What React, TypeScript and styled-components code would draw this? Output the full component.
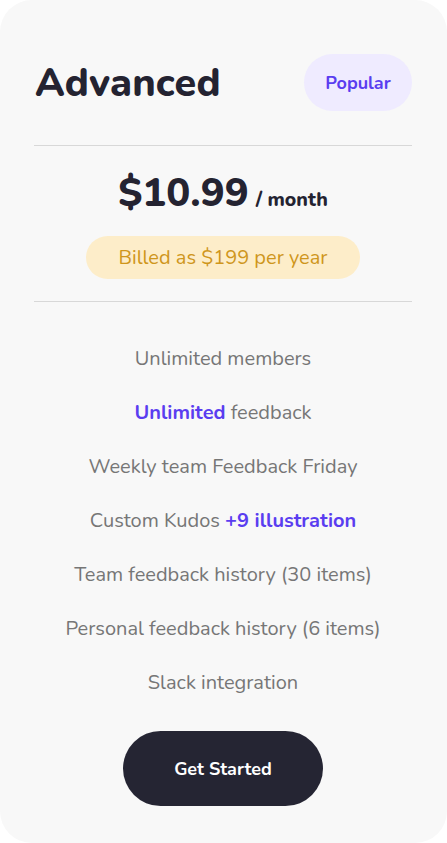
import React from "react";
import styled, { createGlobalStyle } from "styled-components";

const Global = createGlobalStyle`
  html, body { margin: 0; padding: 0; background: #ffffff; }
  body { font-family: "Nunito", "Lato", "Noto Sans", sans-serif; }
  * { box-sizing: border-box; }
`;

const Card = styled.div`
  width: 447px;
  height: 843px;
  background: #f8f8f8;
  border-radius: 32px;
  padding: 54px 35px 0 34px;
  display: flex;
  flex-direction: column;
`;

const Header = styled.div`
  display: flex;
  align-items: center;
  justify-content: space-between;
  height: 57px;
`;

const Title = styled.h1`
  margin: 0 0 0 1px;
  font-size: 39.5px;
  font-weight: 800;
  color: #242331;
  letter-spacing: 0.2px;
`;

const Badge = styled.span`
  width: 108px;
  height: 57px;
  border-radius: 29px;
  background: #efebff;
  color: #5a3df0;
  font-size: 18px;
  font-weight: 700;
  display: flex;
  align-items: center;
  justify-content: center;
`;

const Divider = styled.div<{ $top: number }>`
  height: 1px;
  background: #d8d8d8;
  margin-top: ${(p) => p.$top}px;
`;

const PriceRow = styled.div`
  margin-top: 20px;
  display: flex;
  align-items: baseline;
  justify-content: center;
  gap: 7px;
  color: #242331;
  height: 48px;
`;

const Price = styled.span`
  font-size: 40px;
  font-weight: 800;
`;

const Period = styled.span`
  font-size: 19.5px;
  font-weight: 800;
`;

const BilledWrap = styled.div`
  margin-top: 22px;
  display: flex;
  justify-content: center;
`;

const Billed = styled.span`
  width: 274px;
  height: 43px;
  border-radius: 22px;
  background: #fdedc9;
  color: #cf961c;
  font-size: 20px;
  display: flex;
  align-items: center;
  justify-content: center;
`;

const Features = styled.ul`
  list-style: none;
  margin: 44px 0 0;
  padding: 0;
  display: flex;
  flex-direction: column;
  gap: 28px;
`;

const Feature = styled.li`
  text-align: center;
  font-size: 20px;
  line-height: 26px;
  color: #767676;
`;

const Accent = styled.span`
  color: #5a3df0;
  font-weight: 700;
`;

const ButtonWrap = styled.div`
  margin-top: 35px;
  display: flex;
  justify-content: center;
`;

const Button = styled.button`
  width: 200px;
  height: 75px;
  border-radius: 38px;
  border: none;
  background: #252533;
  color: #ffffff;
  font-family: inherit;
  font-size: 18px;
  font-weight: 700;
  cursor: pointer;
`;

export default function App() {
  return (
    <>
      <Global />
      <Card>
        <Header>
          <Title>Advanced</Title>
          <Badge>Popular</Badge>
        </Header>
        <Divider $top={34} />
        <PriceRow>
          <Price>$10.99</Price>
          <Period>/ month</Period>
        </PriceRow>
        <BilledWrap>
          <Billed>Billed as $199 per year</Billed>
        </BilledWrap>
        <Divider $top={22} />
        <Features>
          <Feature>Unlimited members</Feature>
          <Feature>
            <Accent>Unlimited</Accent> feedback
          </Feature>
          <Feature>Weekly team Feedback Friday</Feature>
          <Feature>
            Custom Kudos <Accent>+9 illustration</Accent>
          </Feature>
          <Feature>Team feedback history (30 items)</Feature>
          <Feature>Personal feedback history (6 items)</Feature>
          <Feature>Slack integration</Feature>
        </Features>
        <ButtonWrap>
          <Button>Get Started</Button>
        </ButtonWrap>
      </Card>
    </>
  );
}
